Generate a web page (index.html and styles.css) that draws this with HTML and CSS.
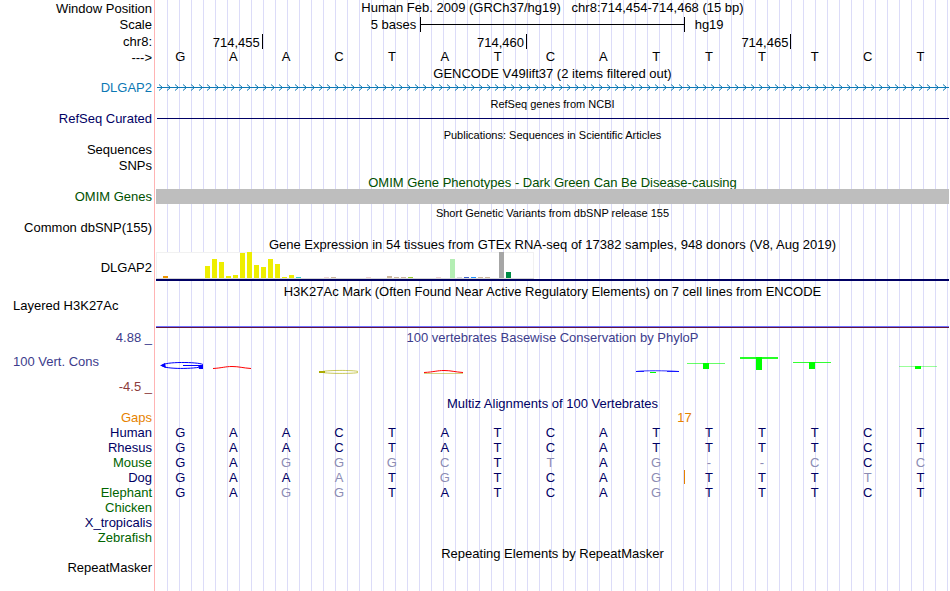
FILE: index.html
```html
<!DOCTYPE html>
<html lang="en">
<head>
<meta charset="utf-8">
<title>chr8:714,454-714,468 genome tracks</title>
<link rel="stylesheet" href="styles.css">
</head>
<body>
<main class="browser">
  <div class="row head"><div class="label">Window Position</div><div class="title">Human Feb. 2009 (GRCh37/hg19) &nbsp; chr8:714,454-714,468 (15 bp)</div></div>
  <div class="row ruler"><div class="label">Scale</div>
    <div class="scale"><span class="scale-text">5 bases</span><span class="scale-bar"></span><span class="scale-name">hg19</span></div></div>
  <div class="row ruler"><div class="label">chr8:</div>
    <div class="grid15"><span class="tick first">714,455</span><span class="tick">714,460</span><span class="tick">714,465</span></div></div>
  <div class="row"><div class="label strand">---&gt;</div>
    <div class="grid15 bases"><b>G</b><b>A</b><b>A</b><b>C</b><b>T</b><b>A</b><b>T</b><b>C</b><b>A</b><b>T</b><b>T</b><b>T</b><b>T</b><b>C</b><b>T</b></div></div>

  <div class="row title-row"><div class="title">GENCODE V49lift37 (2 items filtered out)</div></div>
  <div class="row gene"><div class="label">DLGAP2</div>
    <svg class="arrows" aria-hidden="true">
      <defs><pattern id="arrow" x="3" width="8" height="14" patternUnits="userSpaceOnUse"><path d="M0 3.5 L3.5 6.5 L0 9.5" fill="none" stroke="#0c78b4"/></pattern></defs>
      <rect x="1" y="6" width="100%" height="1" fill="#0c78b4"/>
      <rect x="3" width="100%" height="14" fill="url(#arrow)"/>
    </svg></div>

  <div class="row title-row small"><div class="title">RefSeq genes from NCBI</div></div>
  <div class="row navy"><div class="label">RefSeq Curated</div><div class="intron"></div></div>

  <div class="row title-row small"><div class="title">Publications: Sequences in Scientific Articles</div></div>
  <div class="row"><div class="label">Sequences</div></div>
  <div class="row snps"><div class="label">SNPs</div></div>

  <div class="row omim-title green"><div class="title">OMIM Gene Phenotypes - Dark Green Can Be Disease-causing</div></div>
  <div class="row omim green"><div class="label">OMIM Genes</div><div class="block"></div></div>

  <div class="row title-row small"><div class="title">Short Genetic Variants from dbSNP release 155</div></div>
  <div class="row"><div class="label">Common dbSNP(155)</div></div>

  <div class="row title-row"><div class="title">Gene Expression in 54 tissues from GTEx RNA-seq of 17382 samples, 948 donors (V8, Aug 2019)</div></div>
  <div class="row expression"><div class="label">DLGAP2</div>
    <div class="plot">
    <svg viewBox="0 0 793 27" preserveAspectRatio="none" shape-rendering="crispEdges" role="img" aria-label="Expression by tissue">
      <rect width="378" height="27" fill="#f1f1f1"/><rect x="1" y="1" width="376" height="25" fill="#fff"/><rect y="26" width="378" height="1" fill="#d5d5d5"/>
      <rect x="7" y="24" width="5" height="2" fill="#f09600"/>
      <g fill="#eeee00"><rect x="49" y="14" width="5" height="12"/><rect x="56" y="7" width="5" height="19"/><rect x="63" y="10" width="5" height="16"/><rect x="70" y="24" width="5" height="2"/><rect x="77" y="23" width="5" height="3"/><rect x="84" y="1" width="5" height="25"/><rect x="91" y="0" width="5" height="26"/><rect x="98" y="13" width="5" height="13"/><rect x="105" y="15" width="5" height="11"/><rect x="112" y="7" width="5" height="19"/><rect x="119" y="12" width="5" height="14"/><rect x="126" y="25" width="5" height="1"/><rect x="133" y="23" width="5" height="3"/></g>
      <rect x="140" y="25" width="5" height="1" fill="#33cccc"/>
      <g fill="#eed5d2"><rect x="168" y="25" width="5" height="1"/><rect x="210" y="25" width="5" height="1"/><rect x="280" y="25" width="5" height="1"/></g>
      <g fill="#cdb79e"><rect x="175" y="25" width="5" height="1"/><rect x="231" y="24" width="5" height="2"/><rect x="238" y="25" width="5" height="1"/><rect x="245" y="25" width="5" height="1"/><rect x="322" y="25" width="5" height="1"/><rect x="329" y="25" width="5" height="1"/></g>
      <rect x="252" y="25" width="5" height="1" fill="#9acd32"/>
      <rect x="294" y="7" width="5" height="19" fill="#b4eeb4"/><rect x="301" y="25" width="5" height="1" fill="#d9d9d9"/>
      <rect x="308" y="25" width="5" height="1" fill="#3a5fcd"/><rect x="315" y="25" width="5" height="1" fill="#1e90ff"/>
      <rect x="343" y="0" width="5" height="26" fill="#a6a6a6"/><rect x="350" y="20" width="5" height="6" fill="#008b45"/>
    </svg></div></div>

  <div class="row h3k-title"><div class="title">H3K27Ac Mark (Often Found Near Active Regulatory Elements) on 7 cell lines from ENCODE</div></div>
  <div class="row h3k"><div class="label left">Layered H3K27Ac</div><div class="signal"></div></div>

  <div class="row cons-title violet"><div class="label">4.88 _</div><div class="title">100 vertebrates Basewise Conservation by PhyloP</div></div>
  <div class="row cons violet">
    <div class="cons-labels"><div class="label left">100 Vert. Cons</div><div class="label low">-4.5 _</div></div>
    <svg class="logo" viewBox="0 0 793 49" preserveAspectRatio="none" role="img" aria-label="Conservation score per base">
      <g fill="none" stroke="#0000ff">
        <path d="M47 18.5 C42 15.8 8 15.5 6 19.5 C8 23.5 40 23 46 20.5"/>
        <path d="M27 19.5 H47"/>
      </g>
      <path d="M4 19.5 L9 17 L10 22 Z M42 19 H47 V23 H43 Z" fill="#0000ff"/>
      <path d="M57 22.5 C66 22 69 20.5 76 20.5 C83 20.5 87 22 95 22.5" fill="none" stroke="#ff0000"/>
      <g fill="none" stroke="#aaaa00">
        <path d="M202 25.5 C198 24 168 24 165 26 C168 27.8 198 27.8 202 26.5" stroke-opacity=".65"/>
        <path d="M163 26 H169" stroke-width="2"/>
        <path d="M268 27.5 H307" stroke-opacity=".5"/>
      </g>
      <path d="M268 26.5 C278 26 281 24.5 288 24.5 C295 24.5 299 26 307 26.5" fill="none" stroke="#ff0000"/>
      <path d="M480 25.5 C487 24.5 510 24.5 523 25.5 H511 M480 25.5 H488" fill="none" stroke="#0000ff" stroke-opacity=".8"/>
      <g fill="#00ff00">
        <rect x="494" y="26" width="6" height="1"/>
        <rect x="531" y="17" width="38" height="1" opacity=".6"/><rect x="547" y="17" width="6" height="6"/>
        <rect x="584" y="11" width="38" height="2" opacity=".85"/><rect x="600" y="11" width="6" height="13"/>
        <rect x="637" y="16" width="38" height="1" opacity=".8"/><rect x="653" y="16" width="6" height="7"/>
        <rect x="743" y="20" width="38" height="1" opacity=".4"/><rect x="759" y="20" width="6" height="3"/>
      </g>
    </svg></div>

  <div class="row multiz-title navy"><div class="title">Multiz Alignments of 100 Vertebrates</div></div>
  <table class="align" aria-label="Multiz Alignments of 100 Vertebrates">
    <colgroup><col class="name-col"><col span="15"></colgroup>
    <tbody>
    <tr class="gaps"><th scope="row">Gaps</th><td colspan="9"></td><td class="count" colspan="2">17</td><td colspan="4"></td></tr>
    <tr><th scope="row">Human</th><td>G<td>A<td>A<td>C<td>T<td>A<td>T<td>C<td>A<td>T<td>T<td>T<td>T<td>C<td>T</tr>
    <tr><th scope="row">Rhesus</th><td>G<td>A<td>A<td>C<td>T<td>A<td>T<td>C<td>A<td>T<td>T<td>T<td>T<td>C<td>T</tr>
    <tr><th scope="row" class="alt">Mouse</th><td>G<td>A<td class="diff">G<td class="diff">G<td class="diff">G<td class="diff">C<td>T<td class="diff">T<td>A<td class="diff">G<td class="diff">-<td class="diff">-<td class="diff">C<td>C<td class="diff">C</tr>
    <tr><th scope="row">Dog</th><td>G<td>A<td>A<td class="diff">A<td>T<td class="diff">G<td>T<td>C<td>A<td class="diff insert">G<td>T<td>T<td>T<td class="diff">T<td>T</tr>
    <tr><th scope="row" class="alt">Elephant</th><td>G<td>A<td class="diff">G<td class="diff">G<td>T<td>A<td>T<td>C<td>A<td class="diff">G<td>T<td>T<td>T<td>C<td>T</tr>
    <tr><th scope="row" class="alt">Chicken</th><td colspan="15"></td></tr>
    <tr><th scope="row">X_tropicalis</th><td colspan="15"></td></tr>
    <tr><th scope="row" class="alt">Zebrafish</th><td colspan="15"></td></tr>
    </tbody>
  </table>

  <div class="row repeat-title"><div class="title">Repeating Elements by RepeatMasker</div></div>
  <div class="row"><div class="label">RepeatMasker</div></div>
</main>
</body>
</html>
```
FILE: styles.css
```css
* { box-sizing: border-box; }

body {
  margin: 0;
  background: #fff;
  color: #000;
  font: 13px/14px "Liberation Sans", Arial, sans-serif;
}

/* Red divider after the labels, then a guide line every 12px */
.browser {
  min-height: 100vh;
  padding-right: 1px;
  background:
    linear-gradient(#ffb4b4, #ffb4b4) 154px 0 / 1px 100% no-repeat,
    linear-gradient(#fff, #fff) 0 0 / 156px 100% no-repeat,
    linear-gradient(to right, #dcdcf8 1px, transparent 1px) 11px 0 / 12px 100% repeat-x;
}

.row {
  display: grid;
  grid-template-columns: 156px minmax(0, 1fr);
  height: 14px;
}

.label { padding-right: 4px; text-align: right; white-space: nowrap; }
.label.left { padding-left: 13px; text-align: left; }
.title { grid-column: 2; text-align: center; white-space: nowrap; }

.head { height: 16px; line-height: 16px; }
.head .label { line-height: 18px; }
.ruler { height: 17px; line-height: 17px; }
.title-row { height: 17px; line-height: 19px; }
.small { font-size: 11px; }
.navy { color: #000064; }
.green { color: #005000; }
.violet { color: #3c3c8c; }

/* Scale bar spans the middle third of the window */
.scale { display: grid; grid-template-columns: repeat(3, 1fr); }
.scale-text { padding-right: 4px; text-align: right; }
.scale-bar {
  height: 15px;
  margin-top: 1px;
  border: solid #000;
  border-width: 0 1px;
  background: linear-gradient(#000, #000) 0 7px / 100% 1px no-repeat;
}
.scale-name { padding-left: 10px; }

.grid15 { display: grid; grid-template-columns: repeat(15, minmax(0, 1fr)); }
.tick {
  grid-column: span 5;
  height: 15px;
  margin: 1px -1px 0 0;
  padding-right: 2px;
  border-right: 1px solid #000;
  text-align: right;
}
.tick.first { grid-column: span 2; }
.strand { padding-top: 1px; }
.bases b { padding-right: 4px; font-weight: normal; text-align: center; }

.gene { color: #0c78b4; }
.arrows { display: block; width: 100%; height: 14px; }
.intron { height: 1px; margin: 6px 0 0 1px; background: #000064; }

.snps { height: 16px; line-height: 17px; }
.omim-title { height: 16px; line-height: 19px; }
.omim { height: 15px; line-height: 15px; grid-template-rows: 15px; }
.block { background: #bebebe; }

.expression { height: 29px; line-height: 31px; grid-template-rows: 29px; }
.plot { border-bottom: 2px solid #000064; line-height: 0; }
.plot svg { display: block; width: 100%; height: 27px; }

.h3k-title { height: 18px; line-height: 22px; }
.h3k { height: 29px; }
.signal {
  align-self: end;
  height: 2px;
  border-top: 1px solid #7070ff;
  background: #64143c;
}

.cons-title { height: 18px; line-height: 20px; }
.cons { height: 49px; }
.cons-labels { display: grid; grid-template-rows: 30px 19px; line-height: 32px; }
.low { color: #8c3c3c; line-height: 22px; }
.logo { display: block; width: 100%; height: 49px; }

.multiz-title { height: 16px; line-height: 18px; }
.align {
  width: 100%;
  border-collapse: collapse;
  table-layout: fixed;
  color: #000064;
  line-height: 15px;
}
.name-col { width: 156px; }
.align th { padding: 0 4px 0 0; font-weight: normal; text-align: right; }
.align td { height: 15px; padding: 0 4px 0 0; text-align: center; }
.align .gaps { color: #e68200; line-height: 14px; }
.align .gaps td { height: 14px; }
.align .count { padding: 0; }
.align .alt { color: #006400; }
.align .diff { color: #8c8cb4; }
.align .insert { background: linear-gradient(#e68200, #e68200) 100% 0 / 1px 14px no-repeat; }

.repeat-title { height: 16px; line-height: 18px; }
```
